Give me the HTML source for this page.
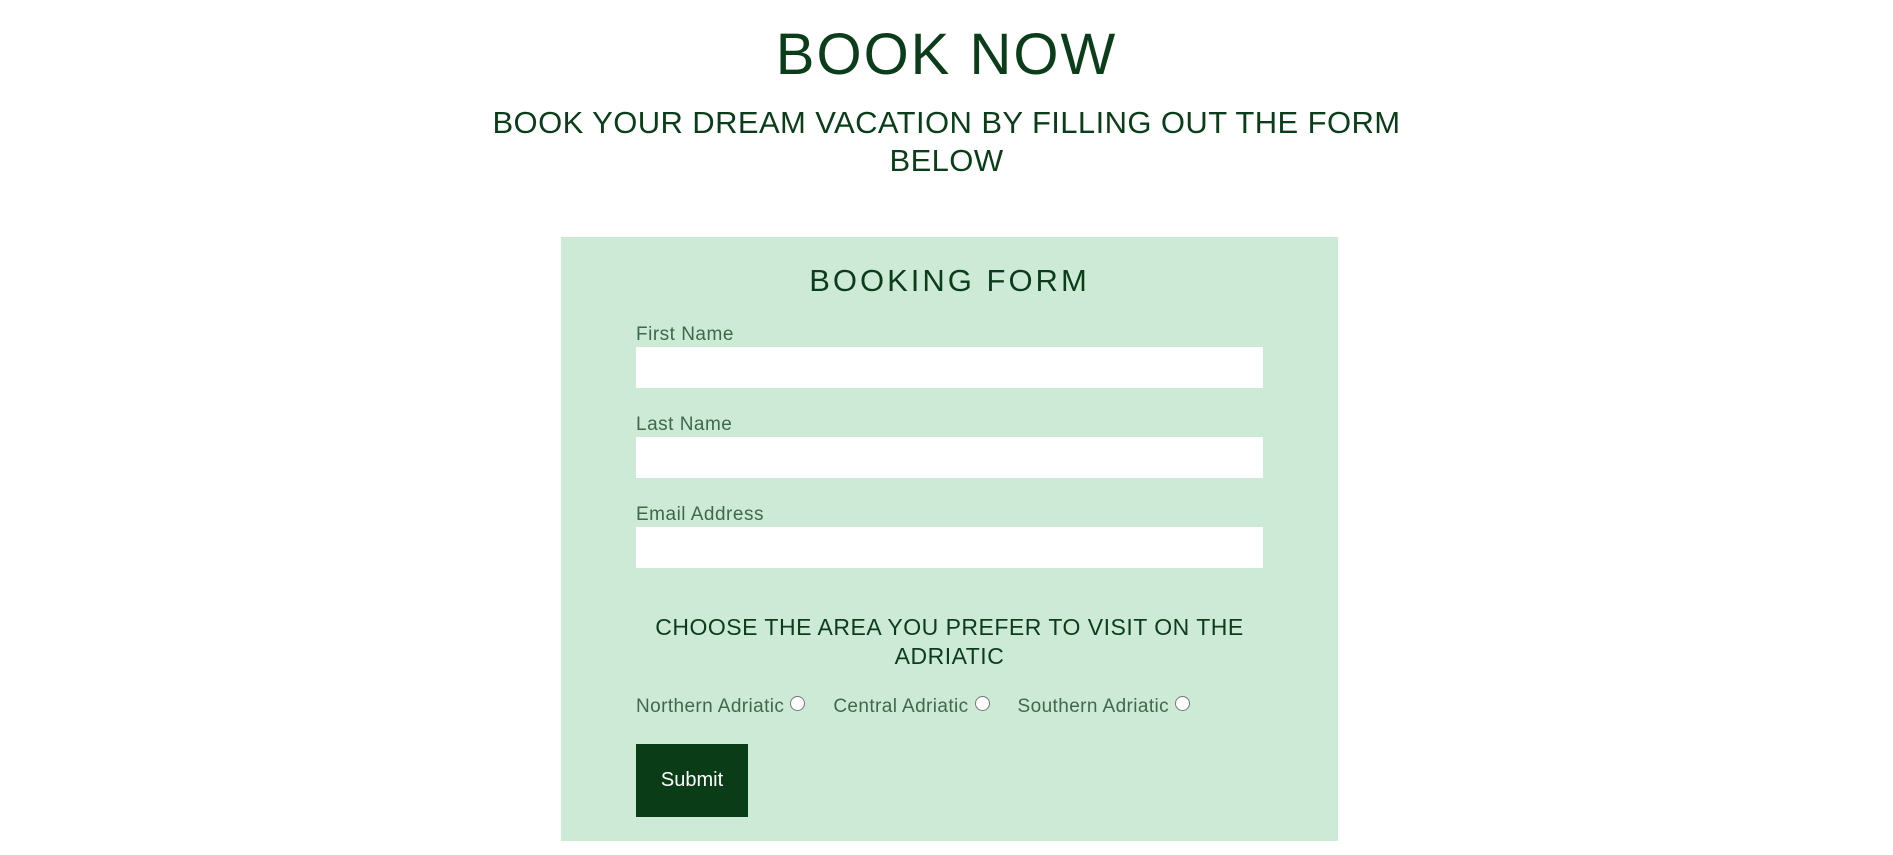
<!DOCTYPE html>
<html><head><meta charset="utf-8"><style>
body{margin:0;width:1893px;height:855px;background:#fff;font-family:"Liberation Sans",sans-serif;color:#0b3d1a;position:relative;overflow:hidden}
.a{position:absolute;white-space:nowrap}
.c{left:0;width:1893px;text-align:center}
.box{position:absolute;left:561px;top:237px;width:777px;height:604px;background:#cdead7}
.lbl{position:absolute;left:636px;font-size:19px;color:#3d6a48;letter-spacing:0.5px}
.in{position:absolute;left:636px;width:627px;height:41px;background:#fff}
.r{display:inline-block;width:13px;height:13px;border:1px solid #777;border-radius:50%;background:#fff;vertical-align:1px;margin-left:6px}
</style></head><body>
<div class="a c" style="top:21px;font-size:58px;letter-spacing:2px;">BOOK NOW</div>
<div class="a c" style="top:104px;font-size:31px;line-height:38px;letter-spacing:0.4px;white-space:normal;">BOOK YOUR DREAM VACATION BY FILLING OUT THE FORM<br>BELOW</div>
<div class="box"></div>
<div class="a" style="left:561px;width:777px;text-align:center;top:263px;font-size:31px;letter-spacing:3px;">BOOKING FORM</div>
<div class="lbl" style="top:324px">First Name</div>
<div class="in" style="top:347px"></div>
<div class="lbl" style="top:414px">Last Name</div>
<div class="in" style="top:437px"></div>
<div class="lbl" style="top:504px">Email Address</div>
<div class="in" style="top:527px"></div>
<div class="a" style="left:561px;width:777px;text-align:center;top:613px;font-size:23px;line-height:29px;letter-spacing:0.5px;">CHOOSE THE AREA YOU PREFER TO VISIT ON THE<br>ADRIATIC</div>
<div class="lbl" style="top:696px;letter-spacing:0.4px">Northern Adriatic<span class="r"></span><span style="margin-left:28px">Central Adriatic</span><span class="r"></span><span style="margin-left:28px">Southern Adriatic</span><span class="r"></span></div>
<div class="a" style="left:636px;top:744px;width:112px;height:73px;background:#0a3c18;color:#fff;font-size:20px;line-height:73px;text-align:center;">Submit</div>
</body></html>
